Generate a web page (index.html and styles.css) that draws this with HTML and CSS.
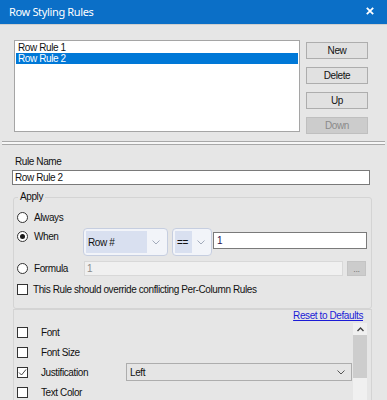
FILE: index.html
```html
<!DOCTYPE html>
<html>
<head>
<meta charset="utf-8">
<title>Row Styling Rules</title>
<link rel="stylesheet" href="styles.css">
</head>
<body>
<header class="titlebar">
  <span class="title">Row Styling Rules</span>
  <svg class="close" width="8" height="8" viewBox="0 0 8 8"><path d="M0.8 0.8 L7.2 7.2 M7.2 0.8 L0.8 7.2" stroke="#fff" stroke-width="1.8" fill="none"/></svg>
</header>

<section class="rules">
  <div class="listbox">
    <div class="item">Row Rule 1</div>
    <div class="item selected">Row Rule 2</div>
  </div>
  <div class="buttons">
    <button class="btn">New</button>
    <button class="btn">Delete</button>
    <button class="btn">Up</button>
    <button class="btn" disabled>Down</button>
  </div>
</section>

<div class="separator"></div>

<section class="editor">
  <label class="field-label">Rule Name</label>
  <div class="textbox name">Row Rule 2</div>

  <fieldset class="apply">
    <legend>Apply</legend>
    <div class="row row-always">
      <span class="radio"></span><span class="opt-text">Always</span>
    </div>
    <div class="row row-when">
      <span class="radio checked"></span><span class="opt-label">When</span>
      <div class="combo combo-field">
        <span class="combo-value">Row #</span>
        <span class="combo-arrow"><svg width="8" height="5" viewBox="0 0 8 5"><path d="M0.5 0.5 L4 4 L7.5 0.5" stroke="#a3abbb" stroke-width="1" fill="none"/></svg></span>
      </div>
      <div class="combo combo-op">
        <span class="combo-value">==</span>
        <span class="combo-arrow"><svg width="8" height="5" viewBox="0 0 8 5"><path d="M0.5 0.5 L4 4 L7.5 0.5" stroke="#a3abbb" stroke-width="1" fill="none"/></svg></span>
      </div>
      <div class="textbox value">1</div>
    </div>
    <div class="row row-formula">
      <span class="radio"></span><span class="opt-label">Formula</span>
      <div class="textbox formula">1</div>
      <div class="ellipsis">...</div>
    </div>
    <div class="row row-override">
      <span class="check"></span><span class="opt-text">This Rule should override conflicting Per-Column Rules</span>
    </div>
  </fieldset>

  <div class="styles-panel">
    <div class="reset-row"><a class="reset">Reset to Defaults</a></div>
    <div class="styles-body">
      <div class="style-list">
        <div class="style-row"><span class="check"></span><span class="style-label">Font</span></div>
        <div class="style-row"><span class="check"></span><span class="style-label">Font Size</span></div>
        <div class="style-row">
          <span class="check checked"><svg width="9" height="9" viewBox="0 0 9 9"><path d="M1 4.5 L3.5 7 L8 1.5" stroke="#333" stroke-width="0.9" fill="none"/></svg></span>
          <span class="style-label">Justification</span>
          <div class="select">
            <span>Left</span>
            <svg width="8" height="5" viewBox="0 0 8 5"><path d="M0.5 0.5 L4 4 L7.5 0.5" stroke="#555" stroke-width="1" fill="none"/></svg>
          </div>
        </div>
        <div class="style-row"><span class="check"></span><span class="style-label">Text Color</span></div>
      </div>
      <div class="scrollbar">
        <div class="scroll-up"><svg width="7" height="5" viewBox="0 0 7 5"><path d="M0.5 4 L3.5 1 L6.5 4" stroke="#404040" stroke-width="1.4" fill="none"/></svg></div>
        <div class="scroll-thumb"></div>
      </div>
    </div>
  </div>
</section>
</body>
</html>
```
FILE: styles.css
```css
* { box-sizing: border-box; }

html, body { margin: 0; padding: 0; }

body {
  width: 387px;
  height: 400px;
  overflow: hidden;
  background: #e6e6e6;
  font-family: "Liberation Sans", Arial, sans-serif;
  font-size: 10px;
  letter-spacing: -0.4px;
  color: #111;
}

/* Title bar */
.titlebar {
  height: 25px;
  background: #0b6fc7;
  border-bottom: 1px solid #cfcfcf;
  color: #fff;
  display: flex;
  align-items: center;
  justify-content: space-between;
  padding: 0 13px 0 9px;
}
.title {
  font-family: "Noto Sans", "Open Sans", sans-serif;
  font-size: 11px;
  letter-spacing: -0.35px;
  margin-top: -1px;
}
.close { margin-top: -3px; }

/* Rules list + buttons */
.rules {
  display: flex;
  padding: 15px 0 0 14px;
}
.listbox {
  width: 286px;
  height: 92px;
  background: #fff;
  border: 1px solid #a5a5a5;
  padding: 1px 1px;
}
.item {
  height: 11px;
  line-height: 11px;
  padding-left: 2px;
}
.item.selected {
  background: #0078d7;
  color: #fff;
}
.buttons {
  display: flex;
  flex-direction: column;
  gap: 8px;
  margin-left: 6px;
  padding-top: 2px;
}
.btn {
  width: 62px;
  height: 17px;
  padding: 0;
  background: #e1e1e1;
  border: 1px solid #adadad;
  font: inherit;
  letter-spacing: inherit;
  color: #111;
  line-height: 15px;
}
.btn:disabled {
  background: #cccccc;
  border-color: #bfbfbf;
  color: #8a8a8a;
}

.separator {
  margin: 7px 2px 0;
  height: 4px;
  border-top: 1px solid #a8a8a8;
  border-bottom: 1px solid #a8a8a8;
  background: #f7f7f7;
}

/* Editor */
.field-label {
  display: block;
  margin: 11px 0 0 15px;
  line-height: 12px;
}
.textbox {
  background: #fff;
  border: 1px solid #7a7a7a;
  padding-left: 2px;
}
.name {
  margin: 2px 0 0 12px;
  width: 358px;
  height: 15px;
  line-height: 13px;
}

.apply {
  margin: 6px 0 0 13px;
  width: 359px;
  padding: 0 0 13px 3px;
  border: 1px solid #d4d4d4;
  border-radius: 3px;
  min-width: 0;
}
.apply legend {
  margin-left: 1px;
  padding: 0 2px;
  line-height: 12px;
}
.row {
  display: flex;
}
.row-always {
  margin-top: 7px;
  height: 14px;
  align-items: center;
}
.row-when {
  margin-top: 4px;
  height: 28px;
  align-items: flex-start;
}
.row-formula {
  margin-top: 5px;
  height: 15px;
  align-items: center;
}
.row-override {
  margin-top: 8px;
  height: 11px;
  align-items: center;
}

.radio {
  width: 11px;
  height: 11px;
  border: 1px solid #333;
  border-radius: 50%;
  background: #fff;
  margin-right: 6px;
  display: flex;
  align-items: center;
  justify-content: center;
  flex: none;
}
.radio.checked::after {
  content: "";
  width: 5px;
  height: 5px;
  border-radius: 50%;
  background: #1a1a1a;
}
.row-when .radio { margin-top: 3px; }
.opt-label {
  width: 49px;
  flex: none;
  line-height: 12px;
}
.row-when .opt-label { margin-top: 3px; }

.check {
  width: 11px;
  height: 11px;
  border: 1px solid #333;
  background: #fff;
  flex: none;
  display: flex;
  align-items: center;
  justify-content: center;
}
.row-override .check { margin-right: 5px; }

.combo {
  height: 28px;
  border: 1px solid #c6cee0;
  border-radius: 4px;
  background: #f2f4f9;
  display: flex;
  padding: 2px;
}
.combo-value {
  background: #d9e0f0;
  display: flex;
  align-items: center;
  padding-left: 2px;
  flex: 1;
}
.combo-arrow {
  display: flex;
  align-items: center;
  justify-content: center;
  flex: none;
}
.combo-field { width: 85px; }
.combo-field .combo-arrow { width: 18px; }
.combo-op { width: 40px; margin-left: 4px; }
.combo-op .combo-arrow { width: 17px; }

.value {
  margin: 4px 0 0 1px;
  width: 154px;
  height: 17px;
  line-height: 15px;
  padding-left: 3px;
  color: #2a0f4f;
}

.formula {
  margin-left: 1px;
  width: 259px;
  height: 15px;
  line-height: 13px;
  background: #f0f0f0;
  border-color: #d8d8d8;
  color: #8c8c8c;
}
.ellipsis {
  margin-left: 4px;
  width: 19px;
  height: 15px;
  background: #cccccc;
  border: 1px solid #c4c4c4;
  color: #7a7a7a;
  text-align: center;
  line-height: 14px;
  font-size: 9px;
}

/* Styles panel */
.styles-panel {
  margin: 0 0 0 13px;
  width: 359px;
  height: 100px;
  border: 1px solid #d4d4d4;
  border-bottom: none;
}
.reset-row {
  text-align: right;
  line-height: 12px;
  padding-right: 8px;
}
.reset {
  color: #1b1bd6;
  text-decoration: underline;
}
.styles-body {
  display: flex;
}
.style-list {
  flex: 1;
  padding-left: 3px;
}
.style-row {
  height: 20px;
  display: flex;
  align-items: center;
}
.style-row .check { margin-right: 13px; }
.style-label {
  width: 85px;
  flex: none;
}
.select {
  width: 226px;
  height: 18px;
  background: #e5e5e5;
  border: 1px solid #adadad;
  display: flex;
  align-items: center;
  justify-content: space-between;
  padding: 0 6px 0 3px;
}
.scrollbar {
  width: 14px;
  height: 80px;
  margin-top: 1px;
  margin-right: 4px;
  background: #f0f0f0;
}
.scroll-up {
  height: 12px;
  display: flex;
  align-items: center;
  justify-content: center;
}
.scroll-thumb {
  height: 43px;
  background: #cdcdcd;
}
```
